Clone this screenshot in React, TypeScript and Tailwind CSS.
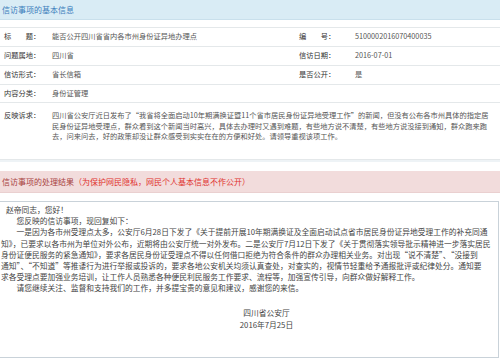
import React from "react";

const font = "font-['Noto_Sans_CJK_SC','Noto_Sans',sans-serif]";

function Row({ children, h = "h-[19px]" }: { children: React.ReactNode; h?: string }) {
  return (
    <div className={`flex items-center border-b border-[#e4e8ea] ${h}`}>{children}</div>
  );
}

export default function App() {
  const lbl = "text-[#333] w-[52px] pl-[4px] shrink-0 whitespace-nowrap";
  const val = "text-[#555] whitespace-nowrap";
  return (
    <div className={`w-[500px] h-[360px] overflow-hidden bg-white text-[7.75px] leading-none ${font}`}>
      {/* basic info header */}
      <div className="h-[20px] bg-[#d9ecf5] border-b border-[#c9e0ec] flex items-center pl-[2px] text-[8px] text-[#3c7cbc]">
        信访事项的基本信息
      </div>
      <div className="mt-[7px] text-[7.25px] border-t border-[#e4e8ea] border-b-[2px] border-b-[#eef3f6]">
        <Row>
          <div className={lbl}>标　　题：</div>
          <div className={`${val} w-[247px]`}>能否公开四川省省内各市州身份证异地办理点</div>
          <div className="text-[#333] w-[56px] whitespace-nowrap">编　　号：</div>
          <div className={val}>5100002016070400035</div>
        </Row>
        <Row>
          <div className={lbl}>问题属地：</div>
          <div className={`${val} w-[247px]`}>四川省</div>
          <div className="text-[#333] w-[56px] whitespace-nowrap">信访日期：</div>
          <div className={val}>2016-07-01</div>
        </Row>
        <Row>
          <div className={lbl}>信访形式：</div>
          <div className={`${val} w-[247px]`}>省长信箱</div>
          <div className="text-[#333] w-[56px] whitespace-nowrap">是否公开：</div>
          <div className={val}>是</div>
        </Row>
        <Row h="h-[18px]">
          <div className={lbl}>内容分类：</div>
          <div className={val}>身份证管理</div>
        </Row>
        <div className="flex h-[57px] border-b border-[#e4e8ea] pt-[7px]">
          <div className={`${lbl} leading-[10.5px]`}>反映诉求：</div>
          <div className="text-[#555] leading-[10.5px] whitespace-nowrap">
            <div>四川省公安厅近日发布了“我省将全面启动10年期满换证暨11个省市居民身份证异地受理工作”的新闻，但没有公布各市州具体的指定居</div>
            <div>民身份证异地受理点，群众看到这个新闻当时高兴，具体去办理时又遇到难题，有些地方说不清楚，有些地方说没接到通知，群众跑来跑</div>
            <div>去，问来问去，好的政策却没让群众感受到实实在在的方便和好处。请领导重视该项工作。</div>
          </div>
        </div>
      </div>
      {/* result header */}
      <div className="mt-[9px] h-[22px] bg-[#f2dcdc] border-b border-[#ead0d0] flex items-center pl-[2px] text-[8px] whitespace-nowrap">
        <span className="text-[#a8413e]">信访事项的处理结果</span>
        <span className="text-[#e0302c]">（为保护网民隐私，网民个人基本信息不作公开）</span>
      </div>
      <div className="mt-[8px] h-[157px] border border-[#c9d2d9] border-l-0 w-[499px] pt-[2px] pl-[1px] text-[#444] leading-[11.2px] whitespace-nowrap">
        <div className="pl-[5px]">赵帝同志，您好！</div>
        <div>　　您反映的信访事项，现回复如下：</div>
        <div>　　一是因为各市州受理点太多，公安厅6月28日下发了《关于提前开展10年期满换证及全面启动试点省市居民身份证异地受理工作的补充同通</div>
        <div>知》，已要求以各市州为单位对外公布，近期将由公安厅统一对外发布。二是公安厅7月12日下发了《关于贯彻落实领导批示精神进一步落实居民</div>
        <div>身份证便民服务的紧急通知》，要求各居民身份证受理点不得以任何借口拒绝为符合条件的群众办理相关业务。对出现“说不清楚”、“没接到</div>
        <div>通知”、“不知道”等推诿行为进行举报或投诉的，要求各地公安机关均须认真查处，对查实的，视情节轻重给予通报批评或纪律处分。通知要</div>
        <div>求各受理点要加强业务培训，让工作人员熟悉各种便民利民服务工作要求、流程等，加强宣传引导，向群众做好解释工作。</div>
        <div>　　请您继续关注、监督和支持我们的工作，并多提宝贵的意见和建议，感谢您的来信。</div>
        <div className="mt-[13px] text-center pl-[34px] leading-[12px]">
          <div>四川省公安厅</div>
          <div>2016年7月25日</div>
        </div>
      </div>
    </div>
  );
}
